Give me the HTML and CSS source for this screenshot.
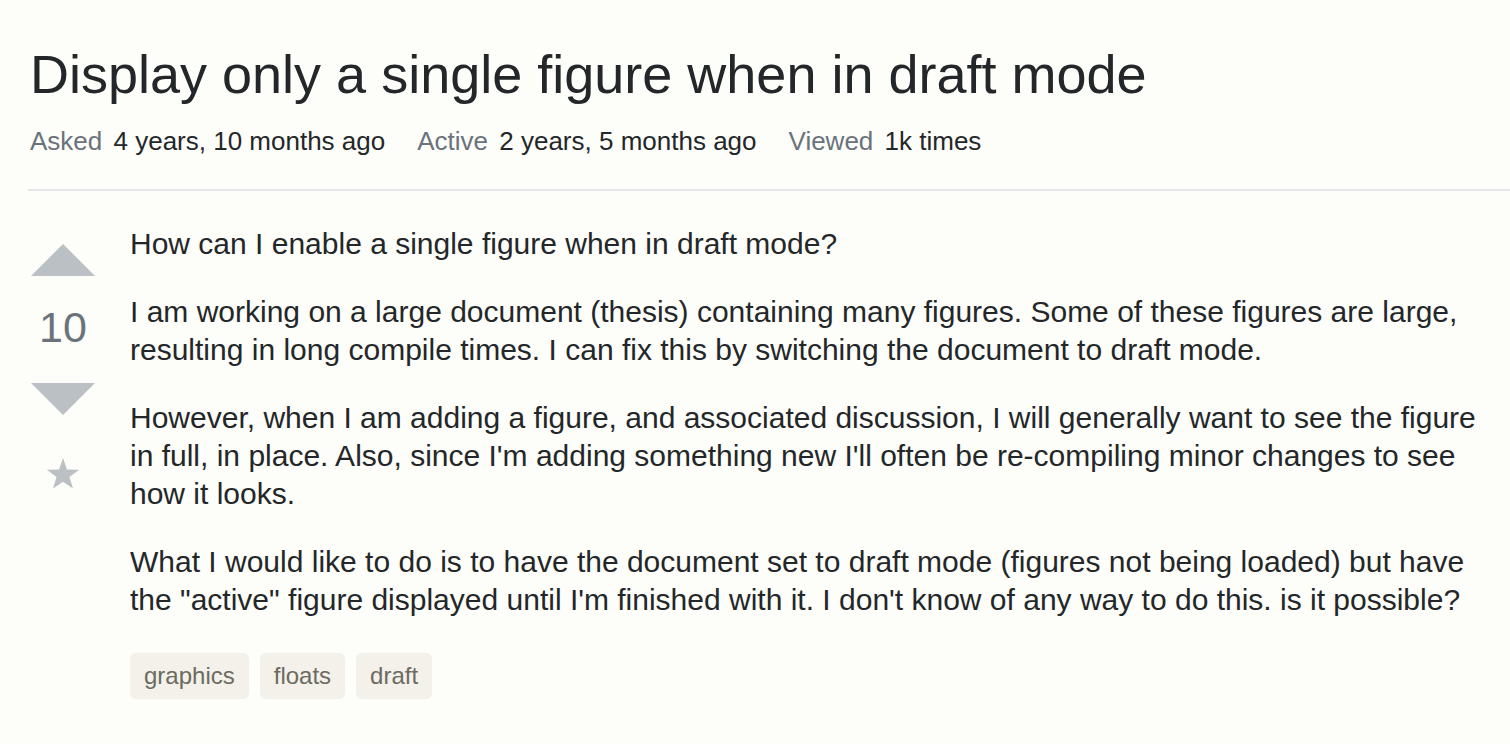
FILE: index.html
```html
<!DOCTYPE html>
<html>
<head>
<meta charset="utf-8">
<link rel="stylesheet" href="styles.css">
</head>
<body>
<div class="page">
  <h1 class="title">Display only a single figure when in draft mode</h1>
  <div class="meta">
    <span class="item"><span class="label">Asked</span> 4 years, 10 months ago</span>
    <span class="item"><span class="label">Active</span> 2 years, 5 months ago</span>
    <span class="item"><span class="label">Viewed</span> 1k times</span>
  </div>
  <div class="divider"></div>
  <div class="post">
    <div class="votes">
      <svg class="arrow up" width="64" height="32" viewBox="0 0 64 32"><path d="M0 32 L32 0 L64 32 Z" fill="#bbc0c4"/></svg>
      <div class="count">10</div>
      <svg class="arrow down" width="64" height="32" viewBox="0 0 64 32"><path d="M0 0 L64 0 L32 32 Z" fill="#bbc0c4"/></svg>
      <svg class="star" width="34" height="32" viewBox="0 0 24 23"><path d="M12 0 L14.8 8.3 L23.6 8.4 L16.6 13.6 L19.2 22 L12 17 L4.8 22 L7.4 13.6 L0.4 8.4 L9.2 8.3 Z" fill="#bbc0c4"/></svg>
    </div>
    <div class="body">
      <p>How can I enable a single figure when in draft mode?</p>
      <p>I am working on a large document (thesis) containing many figures. Some of these figures are large, resulting in long compile times. I can fix this by switching the document to draft mode.</p>
      <p>However, when I am adding a figure, and associated discussion, I will generally want to see the figure in full, in place. Also, since I'm adding something new I'll often be re-compiling minor changes to see how it looks.</p>
      <p>What I would like to do is to have the document set to draft mode (figures not being loaded) but have the "active" figure displayed until I'm finished with it. I don't know of any way to do this. is it possible?</p>
      <div class="tags">
        <span class="tag">graphics</span>
        <span class="tag">floats</span>
        <span class="tag">draft</span>
      </div>
    </div>
  </div>
</div>
</body>
</html>
```

FILE: styles.css
```css
html, body {
  margin: 0;
  padding: 0;
  background: #fdfdf9;
}
body {
  font-family: "Liberation Sans", Arial, sans-serif;
  color: #242729;
}
.page {
  padding: 43px 0 0 28px;
}
.title {
  margin: 0 0 0 2px;
  font-size: 54px;
  font-weight: normal;
  line-height: 62px;
  color: #242729;
}
.meta {
  margin: 17px 0 0 2px;
  font-size: 26px;
  line-height: 38px;
  display: flex;
  gap: 32px;
}
.label {
  color: #6a737c;
  margin-right: 4px;
}
.divider {
  margin-top: 29px;
  height: 2px;
  background: #e4e6e8;
}
.post {
  display: flex;
  margin-top: 34px;
}
.votes {
  width: 70px;
  display: flex;
  flex-direction: column;
  align-items: center;
  padding-top: 19px;
  margin-right: 32px;
}
.arrow { display: block; }
.count {
  font-size: 43px;
  line-height: 52px;
  color: #6a737c;
  margin: 25px 0 30px;
}
.star {
  margin-top: 43px;
}
.body {
  width: 1360px;
}
.body p {
  margin: 0 0 30px;
  font-size: 30px;
  line-height: 38px;
}
.tags {
  display: flex;
  gap: 11px;
  margin-top: 34px;
}
.tag {
  background: #f3f1ea;
  color: #6b6b60;
  font-size: 24px;
  line-height: 46px;
  padding: 0 14px;
  border-radius: 6px;
}
```
